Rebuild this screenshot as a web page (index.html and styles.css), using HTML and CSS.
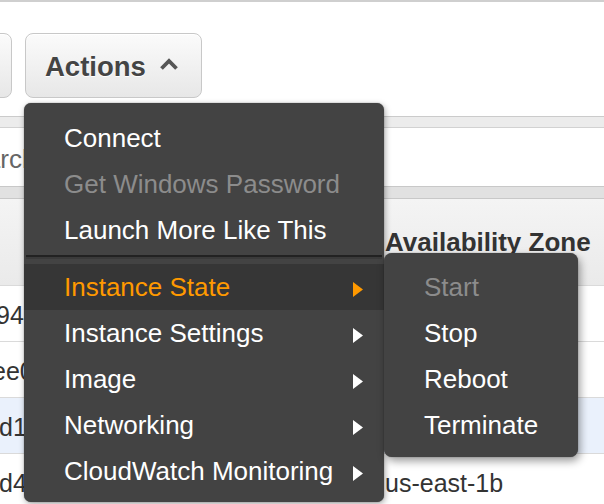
FILE: index.html
```html
<!DOCTYPE html>
<html lang="en">
<head>
<meta charset="utf-8">
<title>Actions menu</title>
<link rel="stylesheet" href="styles.css">
</head>
<body>
<div class="page">
  <div class="topline"></div>
  <div class="toolbar">
    <div class="btn btn-partial"></div>
    <div class="btn btn-actions">
      <span class="btn-label">Actions</span>
      <svg class="caret" width="20" height="14" viewBox="0 0 20 14"><polyline points="2.5,11.5 10,4 17.5,11.5" fill="none" stroke="#555" stroke-width="3.8"/></svg>
    </div>
  </div>
  <div class="band"></div>
  <div class="search"><span class="search-text">Search</span></div>
  <div class="band band-dark"></div>
  <div class="grid thead">
    <div class="cell"></div>
    <div class="cell th">Availability Zone</div>
  </div>
  <div class="grid row">
    <div class="cell id off-a">94</div>
    <div class="cell"></div>
  </div>
  <div class="grid row">
    <div class="cell id off-b">ee0</div>
    <div class="cell"></div>
  </div>
  <div class="grid row row-selected">
    <div class="cell id off-c">d1</div>
    <div class="cell"></div>
  </div>
  <div class="grid row">
    <div class="cell id off-c">d4</div>
    <div class="cell">us-east-1b</div>
  </div>

  <div class="menu">
    <div class="item">Connect</div>
    <div class="item disabled">Get Windows Password</div>
    <div class="item">Launch More Like This</div>
    <div class="separator"></div>
    <div class="item sub active">Instance State
      <svg class="arrow" width="10" height="15" viewBox="0 0 10 15"><polygon points="0,0 10,7.5 0,15"/></svg>
    </div>
    <div class="item sub">Instance Settings
      <svg class="arrow" width="10" height="15" viewBox="0 0 10 15"><polygon points="0,0 10,7.5 0,15"/></svg>
    </div>
    <div class="item sub">Image
      <svg class="arrow" width="10" height="15" viewBox="0 0 10 15"><polygon points="0,0 10,7.5 0,15"/></svg>
    </div>
    <div class="item sub">Networking
      <svg class="arrow" width="10" height="15" viewBox="0 0 10 15"><polygon points="0,0 10,7.5 0,15"/></svg>
    </div>
    <div class="item sub">CloudWatch Monitoring
      <svg class="arrow" width="10" height="15" viewBox="0 0 10 15"><polygon points="0,0 10,7.5 0,15"/></svg>
    </div>
  </div>

  <div class="submenu">
    <div class="item disabled">Start</div>
    <div class="item">Stop</div>
    <div class="item">Reboot</div>
    <div class="item">Terminate</div>
  </div>
</div>
</body>
</html>
```

FILE: styles.css
```css
html, body {
  margin: 0;
  padding: 0;
  background: #fff;
}

body {
  font-family: "Liberation Sans", Arial, Helvetica, sans-serif;
  color: #333;
}

.page {
  position: relative;
  width: 604px;
  height: 504px;
  overflow: hidden;
}

.topline {
  height: 2px;
  background: #cfcfcf;
}

.toolbar {
  height: 114px;
  box-sizing: border-box;
  padding-top: 31px;
  display: flex;
  align-items: flex-start;
}

.btn {
  box-sizing: border-box;
  height: 65px;
  border: 1px solid #c8c8c8;
  border-radius: 8px;
  background: linear-gradient(to bottom, #fbfbfb 0%, #f1f1f1 50%, #e7e7e7 100%);
  box-shadow: inset 0 1px 0 #fff;
}

.btn-partial {
  width: 32px;
  margin-left: -20px;
}

.btn-actions {
  width: 177px;
  margin-left: 13px;
  display: flex;
  align-items: center;
  padding-left: 19px;
}

.btn-label {
  font-size: 27.5px;
  font-weight: bold;
  color: #444;
  text-shadow: 0 1px 0 #fff;
  margin-top: 2px;
}

.caret {
  margin-left: 13px;
  margin-top: -3px;
}

.band {
  height: 10px;
  border-top: 1px solid #cbcbcb;
  border-bottom: 1px solid #d2d2d2;
  background: #ececec;
}

.band-dark {
  height: 11px;
  background: #e1e1e1;
  border-top: 1px solid #c8c8c8;
  border-bottom: 1px solid #c8c8c8;
}

.search {
  height: 58px;
  display: flex;
  align-items: center;
  font-size: 26px;
  color: #666;
  overflow: hidden;
}

.search-text {
  margin-left: -46px;
  padding-top: 4px;
}

.grid {
  display: grid;
  grid-template-columns: 385px 1fr;
}

.thead {
  height: 86px;
  background: linear-gradient(to bottom, #f4f4f4, #eaeaea);
  align-items: center;
}

.th {
  font-weight: bold;
  font-size: 26px;
  color: #333;
  padding-top: 1px;
}

.row {
  height: 55px;
  border-top: 1px solid #dadada;
  align-items: center;
  font-size: 25px;
  color: #333;
  background: #fff;
}

.row-selected {
  background: #eaf1fc;
}

.cell {
  white-space: nowrap;
  overflow: hidden;
}

.row .cell {
  padding-top: 4px;
}

.off-a { margin-left: -4px; }
.off-b { margin-left: -8px; }
.off-c { margin-left: -1px; }

/* dropdown menu */
.menu {
  position: absolute;
  left: 24px;
  top: 103px;
  width: 360px;
  box-sizing: border-box;
  padding: 12px 0 8px;
  background: #434343;
  border-radius: 7px;
  box-shadow: 0 0 1px rgba(0,0,0,0.6), 1px 2px 6px rgba(0,0,0,0.35);
}

.item {
  height: 46px;
  line-height: 45px;
  padding-left: 40px;
  font-size: 26px;
  color: #fff;
  white-space: nowrap;
  display: flex;
  align-items: center;
}

.item.disabled {
  color: #8c8c8c;
}

.item.sub {
  padding-right: 21px;
}

.item.active {
  background: #363636;
  color: #ff9900;
}

.arrow {
  margin-left: auto;
  margin-top: 5px;
  flex: none;
  fill: #fff;
}

.item.active .arrow {
  fill: #ff9900;
}

.separator {
  height: 11px;
  margin: 0 2px;
  background: linear-gradient(to bottom,
    transparent 0, transparent 2px,
    #222 2px, #222 4px,
    #3a3a3a 4px, #3a3a3a 6px,
    transparent 6px);
}

.submenu {
  position: absolute;
  left: 384px;
  top: 253px;
  width: 194px;
  box-sizing: border-box;
  padding: 11px 0 9px;
  background: #434343;
  border-radius: 8px;
  box-shadow: 0 0 1px rgba(0,0,0,0.6), 2px 4px 8px rgba(0,0,0,0.4);
}
```
